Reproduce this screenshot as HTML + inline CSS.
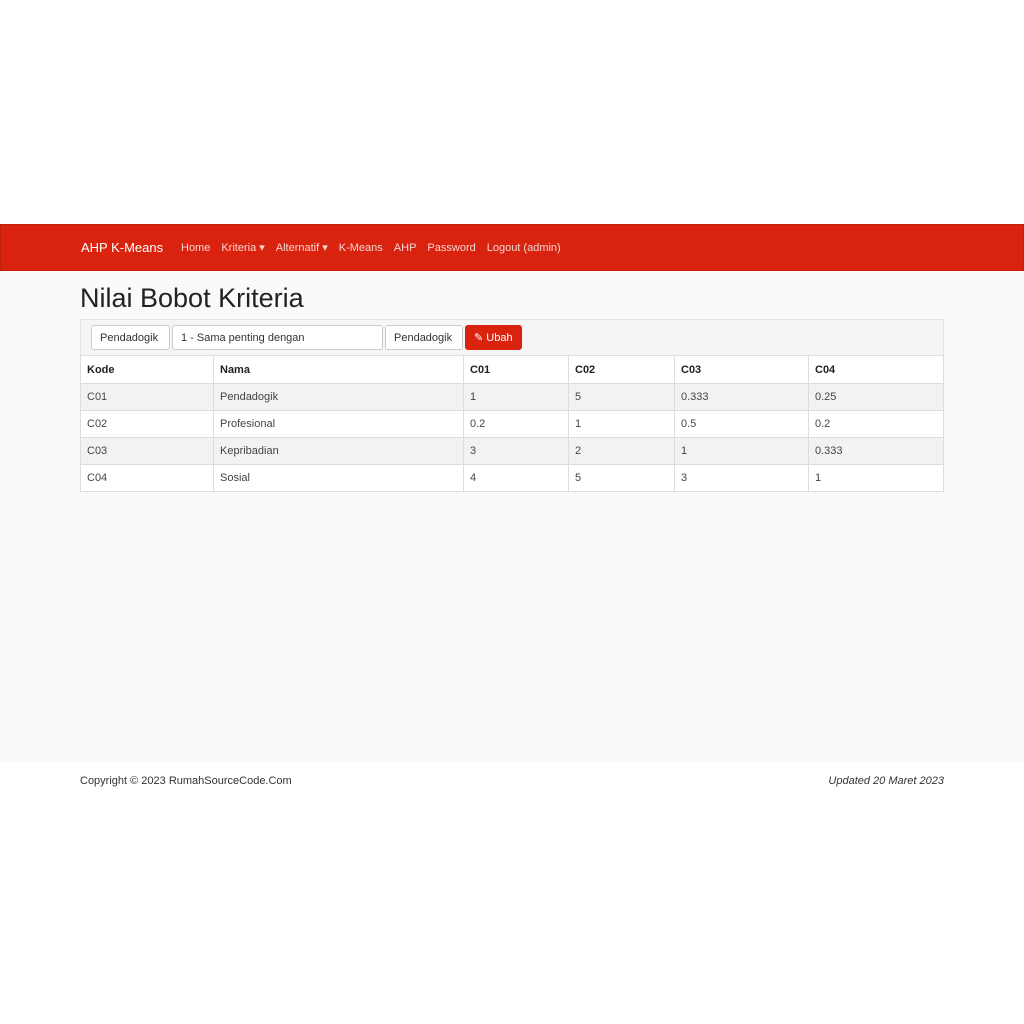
<!DOCTYPE html>
<html><head><meta charset="utf-8"><style>
*{box-sizing:border-box;margin:0;padding:0}
body{width:1024px;height:1024px;background:#fff;font-family:"Liberation Sans",sans-serif;color:#222;position:relative;font-size:11px}
.nav{position:absolute;top:224px;left:0;width:1024px;height:47px;background:#d9230f;border:1px solid #c21f0c;color:#fff}
.brand{position:absolute;left:80px;top:15px;font-size:13px}
.links{position:absolute;left:180px;top:16px;font-size:11px;color:#f4d6d2}
.links span{margin-right:11px}
.main{position:absolute;top:271px;left:0;width:1024px;height:491px;background:#fafafa}
h1{position:absolute;left:80px;top:12px;font-size:27px;font-weight:normal;color:#222}
.bar{position:absolute;left:80px;top:48px;width:864px;height:37px;background:#f5f5f5;border:1px solid #e5e5e5}
.b{position:absolute;top:5px;height:25px;border:1px solid #ccc;border-radius:3px;background:#fff;font-size:11px;line-height:25px;padding-left:8px;color:#333}
.ubah{background:#d9230f;border-color:#d9230f;color:#fff}
table{position:absolute;left:80px;top:84px;width:864px;border-collapse:collapse;background:#fff;border:1px solid #ddd}
td,th{border:1px solid #ddd;height:27px;padding:0 6px;text-align:left;font-size:11px;color:#444}
th{font-weight:bold;height:28px;color:#222}
tr.s td{background:#f2f2f2}
.foot{position:absolute;top:775px;left:80px;width:864px;font-size:11px;color:#333}
</style></head><body>
<div class="nav"><div class="brand">AHP K-Means</div>
<div class="links"><span>Home</span><span>Kriteria ▾</span><span>Alternatif ▾</span><span>K-Means</span><span>AHP</span><span>Password</span><span>Logout (admin)</span></div></div>
<div class="main">
<h1>Nilai Bobot Kriteria</h1>
<div class="bar">
<div class="b" style="left:10px;width:79px">Pendadogik</div>
<div class="b" style="left:91px;width:211px">1 - Sama penting dengan</div>
<div class="b" style="left:304px;width:78px">Pendadogik</div>
<div class="b ubah" style="left:384px;width:57px">✎ Ubah</div>
</div>
<table>
<tr><th style="width:133px">Kode</th><th style="width:250px">Nama</th><th style="width:105px">C01</th><th style="width:106px">C02</th><th style="width:134px">C03</th><th>C04</th></tr>
<tr class="s"><td>C01</td><td>Pendadogik</td><td>1</td><td>5</td><td>0.333</td><td>0.25</td></tr>
<tr><td>C02</td><td>Profesional</td><td>0.2</td><td>1</td><td>0.5</td><td>0.2</td></tr>
<tr class="s"><td>C03</td><td>Kepribadian</td><td>3</td><td>2</td><td>1</td><td>0.333</td></tr>
<tr><td>C04</td><td>Sosial</td><td>4</td><td>5</td><td>3</td><td>1</td></tr>
</table>
</div>
<div class="foot">Copyright © 2023 RumahSourceCode.Com<span style="float:right;font-style:italic">Updated 20 Maret 2023</span></div>
</body></html>
